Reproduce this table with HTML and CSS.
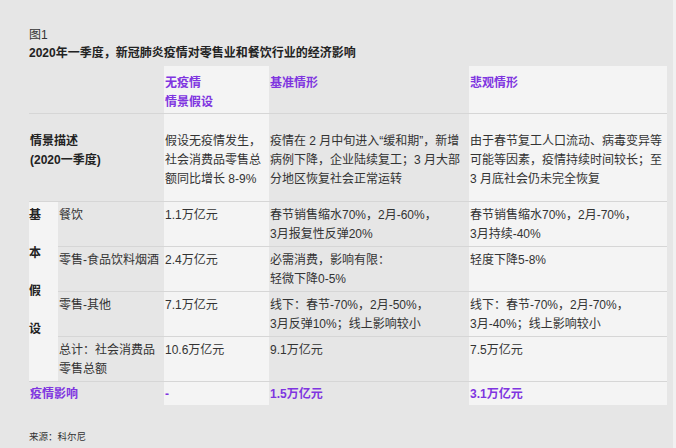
FILE: index.html
```html
<!DOCTYPE html>
<html lang="zh-CN">
<head>
<meta charset="utf-8">
<title>图1</title>
<link rel="stylesheet" href="styles.css">
</head>
<body>
<div class="page">
  <p class="fig">图1</p>
  <h1 class="title">2020年一季度，新冠肺炎疫情对零售业和餐饮行业的经济影响</h1>
  <table class="grid">
    <colgroup>
      <col class="c0"><col class="c1"><col class="c2"><col class="c3"><col class="c4">
    </colgroup>
    <tr class="head">
      <td colspan="2"></td>
      <td class="hl hd">无疫情<br>情景假设</td>
      <td class="hd">基准情形</td>
      <td class="hl hd">悲观情形</td>
    </tr>
    <tr class="desc">
      <td colspan="2" class="lbl">情景描述<br>(2020一季度)</td>
      <td class="hl">假设无疫情发生，<br>社会消费品零售总<br>额同比增长 8-9%</td>
      <td>疫情在 2 月中旬进入“缓和期”，新增<br>病例下降，企业陆续复工；3 月大部<br>分地区恢复社会正常运转</td>
      <td class="hl">由于春节复工人口流动、病毒变异等<br>可能等因素，疫情持续时间较长；至<br>3 月底社会仍未完全恢复</td>
    </tr>
    <tr class="sub">
      <td rowspan="4" class="side">基<br><br>本<br><br>假<br><br>设</td>
      <td>餐饮</td>
      <td class="hl">1.1万亿元</td>
      <td>春节销售缩水70%，2月-60%，<br>3月报复性反弹20%</td>
      <td class="hl">春节销售缩水70%，2月-70%，<br>3月持续-40%</td>
    </tr>
    <tr class="sub">
      <td>零售-食品饮料烟酒</td>
      <td class="hl">2.4万亿元</td>
      <td>必需消费，影响有限：<br>轻微下降0-5%</td>
      <td class="hl">轻度下降5-8%</td>
    </tr>
    <tr class="sub">
      <td>零售-其他</td>
      <td class="hl">7.1万亿元</td>
      <td>线下：春节-70%，2月-50%，<br>3月反弹10%；线上影响较小</td>
      <td class="hl">线下：春节-70%，2月-70%，<br>3月-40%；线上影响较小</td>
    </tr>
    <tr class="sub">
      <td>总计：社会消费品<br>零售总额</td>
      <td class="hl">10.6万亿元</td>
      <td>9.1万亿元</td>
      <td class="hl">7.5万亿元</td>
    </tr>
    <tr class="impact">
      <td colspan="2" class="hd">疫情影响</td>
      <td class="hl hd">-</td>
      <td class="hd">1.5万亿元</td>
      <td class="hl hd">3.1万亿元</td>
    </tr>
  </table>
  <p class="source">来源：科尔尼</p>
</div>
</body>
</html>
```
FILE: styles.css
```css
html, body {
  margin: 0;
  padding: 0;
  background: #f1f1f1;
}
.page {
  width: 673px;
  height: 448px;
  box-sizing: border-box;
  background: #e6e6e6;
  padding: 26px 0 0 29px;
  font-family: "Liberation Sans", "Noto Sans CJK SC", sans-serif;
  color: #333;
  font-size: 12px;
}
.fig {
  margin: 0;
  font-size: 12px;
  line-height: 18px;
  color: #333;
}
.title {
  margin: 0;
  font-size: 12px;
  line-height: 18px;
  font-weight: bold;
  color: #222;
}
.grid {
  margin-top: 4px;
  width: 638px;
  table-layout: fixed;
  border-collapse: separate;
  border-spacing: 0;
  font-size: 12px;
  line-height: 19px;
}
.c0 { width: 29px; }
.c1 { width: 106px; }
.c2 { width: 105px; }
.c3 { width: 200px; }
.c4 { width: 198px; }
.grid td {
  vertical-align: top;
  padding: 0 0 0 1px;
  white-space: nowrap;
}
.hl { background: #f4f4f4; }
.hd {
  color: #7f35e0;
  font-weight: bold;
}
.lbl, .side {
  font-weight: bold;
  color: #222;
}
.head td {
  padding-top: 8px;
  padding-bottom: 1px;
  border-bottom: 1px solid #d6d6d6;
}
.desc td {
  padding-top: 18px;
  padding-bottom: 12px;
  border-bottom: 1px solid #d6d6d6;
}
.sub td {
  padding-top: 4px;
  padding-bottom: 2px;
  border-bottom: 1px solid #d6d6d6;
}
.sub td.side {
  background: #f4f4f4;
  padding-left: 0;
}
.impact td {
  padding-top: 3px;
  padding-bottom: 1px;
}
.source {
  margin: 25px 0 0;
  font-size: 9.5px;
  line-height: 14px;
  color: #333;
}
```
